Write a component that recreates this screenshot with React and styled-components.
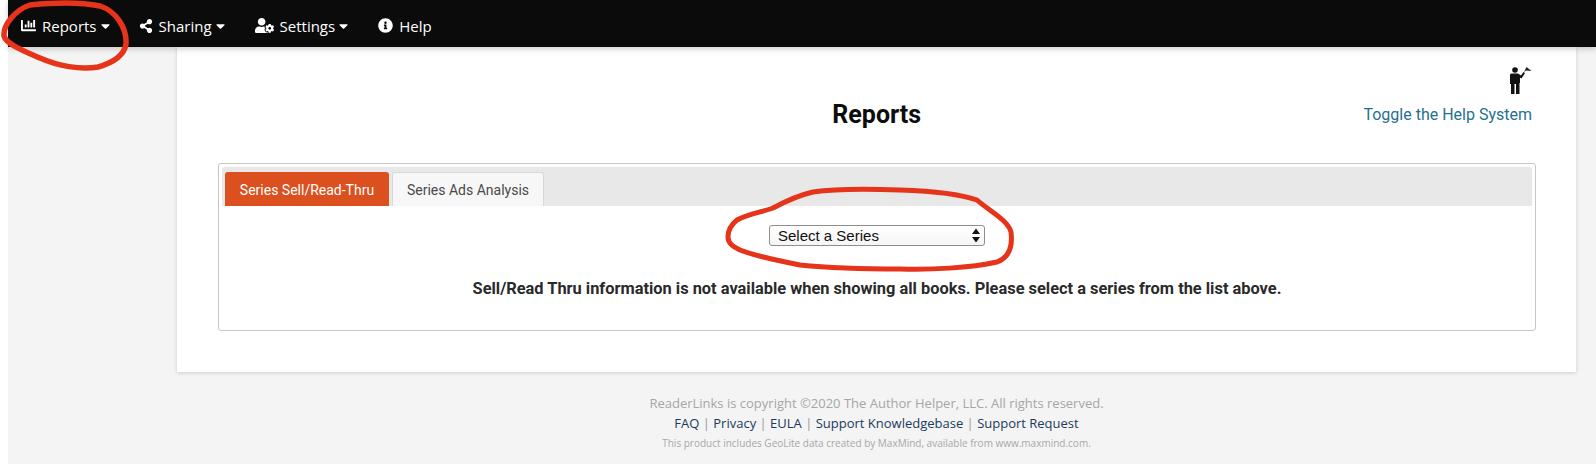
import React from "react";
import styled, { createGlobalStyle } from "styled-components";
import { FaChartBar, FaShareAlt, FaUserCog, FaInfoCircle, FaCaretDown } from "react-icons/fa";

const GlobalStyle = createGlobalStyle`
  html, body {
    margin: 0;
    padding: 0;
    background: #ffffff;
  }
  body {
    font-family: Roboto, "Liberation Sans", sans-serif;
  }
`;

const Page = styled.div`
  position: relative;
  width: 1596px;
  height: 464px;
  overflow: hidden;
  padding-left: 8px;
  box-sizing: border-box;
  background: #ffffff;
`;

const Shell = styled.div`
  height: 464px;
  background: #f4f4f4;
  display: flex;
  flex-direction: column;
`;

const NavBar = styled.nav`
  height: 47px;
  flex: none;
  background: #0b0b0b;
  display: flex;
  align-items: center;
  padding: 4px 0 0 13px;
  box-sizing: border-box;
  box-shadow: 0 2px 6px rgba(0, 0, 0, 0.2);
  position: relative;
`;

const NavItem = styled.a`
  display: flex;
  align-items: center;
  color: #ffffff;
  font-family: "Open Sans", sans-serif;
  font-size: 15px;
  font-weight: 500;
  margin-right: ${(props) => props.$gap}px;
  svg {
    flex: none;
  }
`;

const NavLabel = styled.span`
  margin-left: 6px;
`;

const Caret = styled(FaCaretDown)`
  margin-left: 3px;
  width: 11px;
  height: 14px;
`;

const Main = styled.main`
  margin-left: 169px;
  width: 1399px;
  height: 325px;
  flex: none;
  box-sizing: border-box;
  background: #ffffff;
  box-shadow: 0 1px 4px rgba(0, 0, 0, 0.16);
  padding: 0 40px 0 41px;
`;

const Header = styled.header`
  height: 116px;
  display: grid;
  grid-template-columns: 1fr auto;
  position: relative;
`;

const Title = styled.h1`
  margin: 0;
  padding: 53px 0 0 172px;
  text-align: center;
  font-size: 25px;
  line-height: 29px;
  font-weight: 700;
  color: #0d0d0d;
`;

const HelpToggle = styled.div`
  display: flex;
  flex-direction: column;
  align-items: flex-end;
  padding: 19px 4px 0 0;
`;

const HelpLink = styled.a`
  margin-top: 9px;
  font-size: 16px;
  line-height: 24px;
  color: #1f7190;
`;

const Panel = styled.section`
  height: 168px;
  box-sizing: border-box;
  border: 1px solid #c6c6c6;
  border-radius: 3px;
  padding: 3px;
  background: #ffffff;
`;

const TabStrip = styled.div`
  height: 39px;
  box-sizing: border-box;
  background: #e8e8e8;
  border-radius: 3px 3px 0 0;
  padding: 5px 0 0 3px;
  display: flex;
  gap: 3px;
`;

const Tab = styled.div`
  height: 34px;
  box-sizing: border-box;
  width: ${(props) => props.$width}px;
  display: flex;
  align-items: center;
  justify-content: center;
  font-size: 14px;
  border-radius: 3px 3px 0 0;
  border: 1px solid ${(props) => (props.$active ? "#dc4f1f" : "#d8d8d8")};
  border-bottom: none;
  background: ${(props) => (props.$active ? "#dc4f1f" : "#f7f7f7")};
  color: ${(props) => (props.$active ? "#ffffff" : "#4a4a4a")};
`;

const TabBody = styled.div`
  display: flex;
  flex-direction: column;
  align-items: center;
  padding-top: 19px;
`;

const FakeSelect = styled.div`
  width: 216px;
  height: 21px;
  box-sizing: border-box;
  border: 1px solid #8e8e8e;
  border-radius: 3px;
  background: linear-gradient(#ffffff, #f5f5f5);
  display: flex;
  align-items: center;
  justify-content: space-between;
  padding: 0 3px 0 8px;
  font-family: "Liberation Sans", Arial, sans-serif;
  font-size: 15px;
  color: #111111;
`;

const Message = styled.p`
  margin: 33px 0 0;
  font-size: 16.4px;
  line-height: 20px;
  font-weight: 700;
  color: #2a2a2a;
`;

const Footer = styled.footer`
  margin-left: 169px;
  width: 1399px;
  padding-top: 21px;
  text-align: center;
  font-family: "Open Sans", sans-serif;
`;

const Copyright = styled.div`
  font-size: 13px;
  line-height: 20px;
  color: #a6a6a6;
`;

const Links = styled.div`
  font-size: 13px;
  line-height: 20px;
  color: #999999;
`;

const FooterLink = styled.a`
  color: #1b3a5c;
`;

const Small = styled.div`
  font-size: 10px;
  line-height: 21px;
  color: #a8a8a8;
`;

const Scribble = styled.svg`
  position: absolute;
  left: 0;
  top: 0;
  pointer-events: none;
`;

const SelectArrows = () => (
  <svg width="10" height="15" viewBox="0 0 10 15">
    <path d="M5 0.5 L9 6 H1 Z M5 14.5 L9 9 H1 Z" fill="#111111" />
  </svg>
);

const FlagPerson = () => (
  <svg width="24" height="28" viewBox="0 0 24 28">
    <circle cx="7" cy="4" r="2.8" fill="#111" />
    <path
      d="M2 9 C2 8 3 7.5 4 7.5 H10 L13 9.5 L15.5 6 L17 7 L13.5 12.5 L12 11.5 V17 H11.5 V28 H8 V18 H6.5 V28 H3 V18 H2 Z"
      fill="#111"
    />
    <path d="M16 6 L18.5 1 L23.5 5 L18 4.5 Z" fill="#222" />
  </svg>
);

const App = () => {
  return (
    <>
      <GlobalStyle />
      <Page>
        <Shell>
          <NavBar>
            <NavItem $gap={28}>
              <FaChartBar size={15} />
              <NavLabel>Reports</NavLabel>
              <Caret />
            </NavItem>
            <NavItem $gap={29}>
              <FaShareAlt size={14} />
              <NavLabel>Sharing</NavLabel>
              <Caret />
            </NavItem>
            <NavItem $gap={29}>
              <FaUserCog size={19} />
              <NavLabel>Settings</NavLabel>
              <Caret />
            </NavItem>
            <NavItem>
              <FaInfoCircle size={15} />
              <NavLabel>Help</NavLabel>
            </NavItem>
          </NavBar>
          <Main>
            <Header>
              <Title>Reports</Title>
              <HelpToggle>
                <FlagPerson />
                <HelpLink>Toggle the Help System</HelpLink>
              </HelpToggle>
            </Header>
            <Panel>
              <TabStrip>
                <Tab $active $width={164}>
                  Series Sell/Read-Thru
                </Tab>
                <Tab $width={152}>Series Ads Analysis</Tab>
              </TabStrip>
              <TabBody>
                <FakeSelect>
                  Select a Series
                  <SelectArrows />
                </FakeSelect>
                <Message>
                  Sell/Read Thru information is not available when showing all books. Please select a series from the list above.
                </Message>
              </TabBody>
            </Panel>
          </Main>
          <Footer>
            <Copyright>ReaderLinks is copyright ©2020 The Author Helper, LLC. All rights reserved.</Copyright>
            <Links>
              <FooterLink>FAQ</FooterLink> | <FooterLink>Privacy</FooterLink> | <FooterLink>EULA</FooterLink> |{" "}
              <FooterLink>Support Knowledgebase</FooterLink> | <FooterLink>Support Request</FooterLink>
            </Links>
            <Small>This product includes GeoLite data created by MaxMind, available from www.maxmind.com.</Small>
          </Footer>
        </Shell>
        <Scribble width="1596" height="464" viewBox="0 0 1596 464" fill="none">
          <path
            d="M30 5 C50 3 80 2 100 6 C116 11 127 28 126 44 C124 56 112 63 98 67 C80 70 58 66 40 58 C24 51 6 44 4 36 C3 25 15 10 30 5 Z"
            stroke="#e6341a"
            strokeWidth="5.5"
            strokeLinejoin="round"
          />
          <path
            d="M813 192 C840 188 875 189 900 190 C930 191 960 194 977 200 C988 210 1008 220 1011 232 C1013 248 1008 258 997 262 C970 268 930 270 900 269 C865 269 830 268 800 265 C780 261 755 256 740 250 C732 246 728 243 728 237 C728 229 732 224 737 220 C748 214 762 212 773 208 C786 201 800 195 813 192 Z"
            stroke="#e6341a"
            strokeWidth="5"
            strokeLinejoin="round"
          />
        </Scribble>
      </Page>
    </>
  );
};

export default App;
